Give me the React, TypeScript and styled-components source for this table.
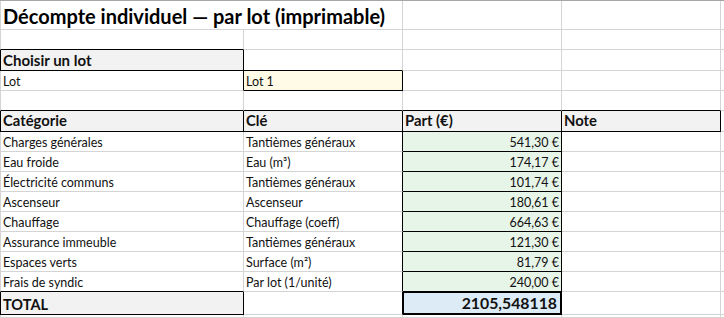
import React from 'react';
import styled, { createGlobalStyle, css } from 'styled-components';

const GRID = '#d4d4d4';
const INK = '#000';
const COLS = '244px 159px 159px 159px 1fr';

const GlobalStyle = createGlobalStyle`
  html, body {
    margin: 0;
    padding: 0;
    background: #fff;
  }
  body {
    font-family: Lato, 'Liberation Sans', sans-serif;
    color: #111;
    overflow: hidden;
  }
`;

type Kind = 'title' | 'label' | 'head' | 'body' | 'amount' | 'total' | 'totalAmount';

type Spec = {
  text?: string;
  kind?: Kind;
  span?: number;
  fill?: string;
  box?: boolean;
  thick?: boolean;
};

type RowSpec = { h: number; cells: Spec[] };

const kindStyles: Record<Kind, ReturnType<typeof css>> = {
  title: css`
    font-size: 20px;
    font-weight: 700;
    padding-bottom: 1px;
    color: #000;
  `,
  label: css`
    font-size: 15px;
    font-weight: 700;
    padding-bottom: 1px;
  `,
  head: css`
    font-size: 14.8px;
    font-weight: 700;
    padding-bottom: 1px;
  `,
  body: css`
    font-size: 12.5px;
    padding-bottom: 1px;
  `,
  amount: css`
    font-size: 12.5px;
    padding-bottom: 1px;
    justify-content: flex-end;
  `,
  total: css`
    font-size: 14.5px;
    font-weight: 700;
    padding-bottom: 1px;
  `,
  totalAmount: css`
    font-size: 15.8px;
    font-weight: 700;
    padding-bottom: 1px;
    padding-right: 4px;
    justify-content: flex-end;
  `,
};

const Sheet = styled.div`
  width: 724px;
  border-top: 1px solid #a6a6a6;
`;

const Row = styled.div<{ $h: number }>`
  display: grid;
  grid-template-columns: ${COLS};
  height: ${p => p.$h}px;
`;

const Cell = styled.div<{
  $kind: Kind;
  $span: number;
  $fill: string;
  $right: string;
  $bottom: string;
  $left?: string;
  $thick: boolean;
}>`
  grid-column: span ${p => p.$span};
  box-sizing: border-box;
  display: flex;
  align-items: flex-end;
  min-width: 0;
  white-space: nowrap;
  line-height: 1.2;
  padding: 0 2px 0 2px;
  background: ${p => p.$fill};
  border-right: 1px solid ${p => p.$right};
  border-bottom: 1px solid ${p => p.$bottom};
  ${p => p.$left && css`border-left: 1px solid ${p.$left};`}
  ${p => p.$thick && css`box-shadow: inset 0 0 0 1px ${INK};`}
  ${p => kindStyles[p.$kind]}
`;

const HEAD = '#f2f2f2';
const PART = '#e7f4e8';
const INPUT = '#fffbe6';
const TOTAL = '#ddebf7';

const lines: [string, string, string][] = [
  ['Charges générales', 'Tantièmes généraux', '541,30 €'],
  ['Eau froide', 'Eau (m³)', '174,17 €'],
  ['Électricité communs', 'Tantièmes généraux', '101,74 €'],
  ['Ascenseur', 'Ascenseur', '180,61 €'],
  ['Chauffage', 'Chauffage (coeff)', '664,63 €'],
  ['Assurance immeuble', 'Tantièmes généraux', '121,30 €'],
  ['Espaces verts', 'Surface (m²)', '81,79 €'],
  ['Frais de syndic', 'Par lot (1/unité)', '240,00 €'],
];

const rows: RowSpec[] = [
  { h: 29, cells: [{ text: 'Décompte individuel — par lot (imprimable)', kind: 'title', span: 2 }, {}, {}, {}] },
  { h: 20, cells: [{}, {}, {}, {}, {}] },
  { h: 21, cells: [{ text: 'Choisir un lot', kind: 'label', box: true, fill: HEAD }, {}, {}, {}, {}] },
  { h: 20, cells: [{ text: 'Lot' }, { text: 'Lot 1', box: true, fill: INPUT }, {}, {}, {}] },
  { h: 20, cells: [{}, {}, {}, {}, {}] },
  {
    h: 21,
    cells: [
      ...['Catégorie', 'Clé', 'Part (€)', 'Note'].map(t => ({ text: t, kind: 'head' as Kind, box: true, fill: HEAD })),
      {},
    ],
  },
  ...lines.map(([cat, key, part]) => ({
    h: 20,
    cells: [{ text: cat }, { text: key }, { text: part, kind: 'amount' as Kind, box: true, fill: PART }, {}, {}],
  })),
  {
    h: 23,
    cells: [
      { text: 'TOTAL', kind: 'total', box: true, fill: HEAD },
      {},
      { text: '2105,548118', kind: 'totalAmount', box: true, thick: true, fill: TOTAL },
      {},
      {},
    ],
  },
  { h: 3, cells: [{}, {}, {}, {}, {}] },
];

// which cell of a row covers a given column
const owner = (r: number, c: number): Spec | undefined => {
  const row = rows[r];
  if (!row) return undefined;
  let col = 0;
  for (const cell of row.cells) {
    const span = cell.span ?? 1;
    if (c >= col && c < col + span) return cell;
    col += span;
  }
  return undefined;
};

const boxed = (r: number, c: number) => !!owner(r, c)?.box;

const App: React.FC = () => {
  return (
    <>
      <GlobalStyle />
      <Sheet>
        {rows.map((row, r) => {
          let col = 0;
          return (
            <Row key={r} $h={row.h}>
              {row.cells.map((cell, i) => {
                const span = cell.span ?? 1;
                const c0 = col;
                const c1 = col + span - 1;
                col += span;
                const below = Array.from({ length: span }, (_, k) => boxed(r + 1, c0 + k)).some(Boolean);
                const right = cell.box || boxed(r, c1 + 1) ? INK : GRID;
                const bottom = cell.box || below ? INK : GRID;
                const left = c0 === 0 ? (cell.box ? INK : GRID) : undefined;
                return (
                  <Cell
                    key={i}
                    $kind={cell.kind ?? 'body'}
                    $span={span}
                    $fill={cell.fill ?? '#fff'}
                    $right={right}
                    $bottom={bottom}
                    $left={left}
                    $thick={!!cell.thick}
                  >
                    {cell.text}
                  </Cell>
                );
              })}
            </Row>
          );
        })}
      </Sheet>
    </>
  );
};

export default App;
